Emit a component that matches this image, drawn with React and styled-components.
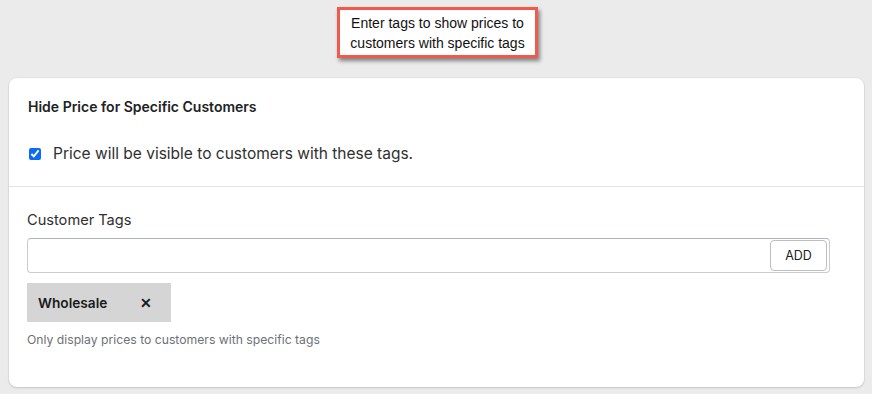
import React from "react";
import styled, { createGlobalStyle } from "styled-components";

const Global = createGlobalStyle`
  html, body { margin: 0; padding: 0; }
  body {
    background: #ebebeb;
    font-family: Inter, "Noto Sans", sans-serif;
    color: #202223;
  }
`;

const Page = styled.div`
  width: 872px;
  height: 394px;
  box-sizing: border-box;
  padding: 7px 8px 0 9px;
  display: flex;
  flex-direction: column;
  align-items: stretch;
`;

const TipRow = styled.div`
  display: flex;
  justify-content: center;
  padding-left: 2px;
`;

const Tip = styled.div`
  width: 201px;
  box-sizing: border-box;
  background: #fff;
  border: 3px solid #f2584c;
  box-shadow: 2px 3px 4px rgba(0, 0, 0, 0.45);
  font-family: "Liberation Sans", Arial, sans-serif;
  font-size: 14px;
  line-height: 20px;
  color: #111;
  text-align: center;
  padding: 3px 4px 2px;
`;

const Card = styled.section`
  margin-top: 20px;
  background: #fff;
  border-radius: 8px;
  box-shadow: 0 0 0 1px rgba(63, 63, 68, 0.04), 0 1px 2px rgba(63, 63, 68, 0.18);
  height: 309px;
  box-sizing: border-box;
`;

const Section = styled.div`
  padding: ${(p) => p.$pad};
  border-top: ${(p) => (p.$divided ? "1px solid #e1e3e5" : "none")};
`;

const Heading = styled.h2`
  margin: 0;
  font-size: 14px;
  font-weight: 600;
  line-height: 20px;
  color: #202223;
`;

const CheckRow = styled.label`
  display: flex;
  align-items: center;
  gap: 12px;
  margin-top: 27px;
  font-size: 15.5px;
  line-height: 20px;
  color: #303030;
`;

const Check = styled.input`
  margin: 0 0 0 1px;
  width: 12px;
  height: 12px;
  accent-color: #0b6bf2;
`;

const Label = styled.div`
  font-size: 14.6px;
  line-height: 20px;
  color: #303030;
  margin-bottom: 8px;
`;

const InputWrap = styled.div`
  display: flex;
  align-items: center;
  justify-content: flex-end;
  width: 803px;
  height: 35px;
  box-sizing: border-box;
  border: 1px solid #c9cccf;
  border-top-color: #aeb4b9;
  border-radius: 4px;
  padding: 1px 2px;
`;

const AddButton = styled.button`
  height: 31px;
  width: 57px;
  background: #fff;
  border: 1px solid #babfc3;
  border-radius: 4px;
  font-family: Inter, "Noto Sans", sans-serif;
  font-size: 12.5px;
  color: #202223;
  padding: 0;
`;

const Tag = styled.div`
  margin-top: 10px;
  width: 144px;
  height: 39px;
  box-sizing: border-box;
  background: #d5d5d5;
  display: flex;
  align-items: center;
  padding: 0 12px 0 11px;
  gap: 33px;
  font-size: 13.7px;
  font-weight: 600;
  color: #1a1a1a;
`;

const Close = styled.span`
  font-size: 14px;
  font-weight: 700;
  line-height: 1;
`;

const Help = styled.div`
  margin-top: 9px;
  font-size: 12.2px;
  line-height: 18px;
  color: #6d7175;
`;

export default function App() {
  return (
    <>
      <Global />
      <Page>
        <TipRow>
          <Tip>Enter tags to show prices to customers with specific tags</Tip>
        </TipRow>
        <Card>
          <Section $pad="19px 18px 22px 19px">
            <Heading>Hide Price for Specific Customers</Heading>
            <CheckRow>
              <Check type="checkbox" defaultChecked />
              Price will be visible to customers with these tags.
            </CheckRow>
          </Section>
          <Section $divided $pad="23px 18px 20px 18px">
            <Label>Customer Tags</Label>
            <InputWrap>
              <AddButton>ADD</AddButton>
            </InputWrap>
            <Tag>
              Wholesale <Close>✕</Close>
            </Tag>
            <Help>Only display prices to customers with specific tags</Help>
          </Section>
        </Card>
      </Page>
    </>
  );
}
